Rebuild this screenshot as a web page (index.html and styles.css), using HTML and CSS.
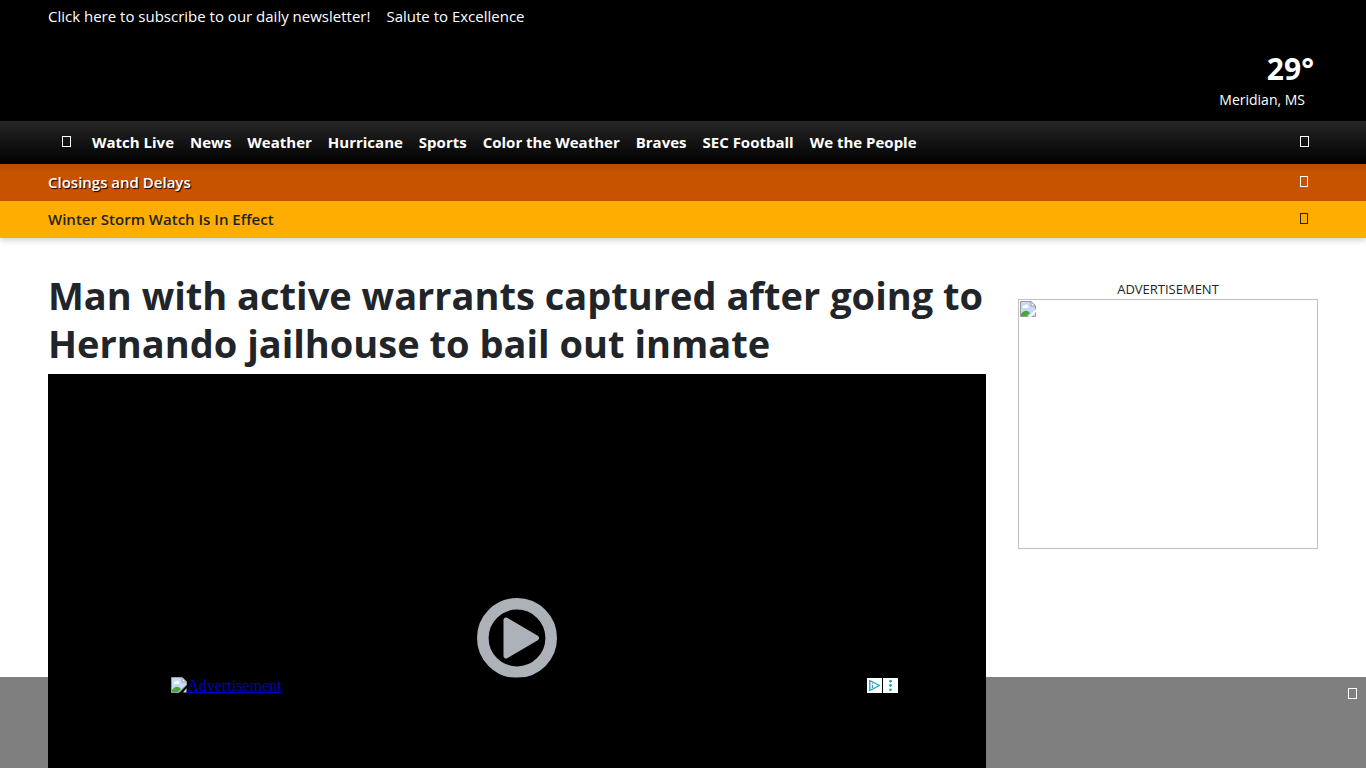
FILE: index.html
```html
<!DOCTYPE html>
<html lang="en">
<head>
<meta charset="utf-8">
<meta name="viewport" content="width=device-width, initial-scale=1">
<title>Man with active warrants captured after going to Hernando jailhouse to bail out inmate</title>
<link rel="stylesheet" href="styles.css">
</head>
<body>
<header class="site-header">
  <div class="masthead">
    <nav class="top-links" aria-label="Promotions">
      <a href="#">Click here to subscribe to our daily newsletter!</a>
      <a href="#">Salute to Excellence</a>
    </nav>
    <a class="weather" href="#">
      <span class="temp">29°</span>
      <span class="city">Meridian, MS</span>
    </a>
  </div>
  <nav class="main-nav" aria-label="Main">
    <button class="icon-button menu-button" type="button" aria-label="Menu"><span class="glyph"></span></button>
    <a href="#">Watch Live</a>
    <a href="#">News</a>
    <a href="#">Weather</a>
    <a href="#">Hurricane</a>
    <a href="#">Sports</a>
    <a href="#">Color the Weather</a>
    <a href="#">Braves</a>
    <a href="#">SEC Football</a>
    <a href="#">We the People</a>
    <button class="icon-button search-button" type="button" aria-label="Search"><span class="glyph"></span></button>
  </nav>
  <a class="alert closings" href="#">Closings and Delays <span class="glyph small"></span></a>
  <a class="alert storm" href="#">Winter Storm Watch Is In Effect <span class="glyph small"></span></a>
</header>
<main class="page">
  <article class="story">
    <h1>Man with active warrants captured after going to Hernando jailhouse to bail out inmate</h1>
    <div class="video">
      <button class="play" type="button" aria-label="Play video">
        <svg viewBox="0 0 80 80" width="80" height="80" aria-hidden="true">
          <circle cx="40" cy="40" r="34.2" fill="none" stroke="#adb1b8" stroke-width="11.6"/>
          <path d="M29 22 59.500 40 29 58Z" fill="#adb1b8" stroke="#adb1b8" stroke-width="5" stroke-linejoin="round"/>
        </svg>
      </button>
    </div>
  </article>
  <aside class="sidebar">
    <p class="ad-label">ADVERTISEMENT</p>
    <a class="ad-box" href="#" aria-label="Advertisement">
      <svg class="broken" viewBox="0 0 16 16" width="16" height="16" aria-hidden="true">
        <path d="M.5.5H11L15.500 5V15.500H.5Z" fill="#c5d9f8" stroke="#9a9a9a"/>
        <path d="M11 .5V5h4.500Z" fill="#fff" stroke="#9a9a9a"/>
        <path d="M3 7C2 5 4 4 5 5c1-3 4-1 3 1 1 1 0 1-1 1Z" fill="#fff"/>
        <path d="M1 15v-2c2-3 6-5 9-1l-3 3Z" fill="#4da43a"/>
        <path d="M8 16 16 8v3l-5 5Z" fill="#fff"/>
      </svg>
    </a>
  </aside>
</main>
<div class="bottom-ad">
  <div class="banner">
    <a class="banner-link" href="#">
      <svg class="broken" viewBox="0 0 16 16" width="16" height="16" aria-hidden="true">
        <path d="M.5.5H11L15.500 5V8L8 15.500H.5Z" fill="#c5d9f8" stroke="#9a9a9a"/>
        <path d="M11 .5V5h4.500Z" fill="#fff" stroke="#9a9a9a"/>
        <path d="M3 7C2 5 4 4 5 5c1-3 4-1 3 1 1 1 0 1-1 1Z" fill="#fff"/>
        <path d="M1 15v-2c2-3 6-5 9-1l-3 3Z" fill="#4da43a"/>
        <path d="M12 15.500H15.500V11Z" fill="#c5d9f8"/>
      </svg><span>Advertisement</span>
    </a>
    <div class="choices">
      <button type="button" aria-label="AdChoices">
        <svg viewBox="0 0 15 15" width="15" height="15" aria-hidden="true"><path d="M2.800 2.500 12.500 7.500 2.800 12.500Z" fill="none" stroke="#22a7bd" stroke-width="1.400" stroke-linejoin="round"/><path d="M5.500 7v3M5.500 4.800v1" stroke="#22a7bd" stroke-width="1.300"/></svg>
      </button>
      <button type="button" aria-label="Ad options">
        <svg viewBox="0 0 15 15" width="15" height="15" aria-hidden="true"><g fill="#22a7bd"><circle cx="7.500" cy="3.200" r="1.400"/><circle cx="7.500" cy="7.500" r="1.400"/><circle cx="7.500" cy="11.800" r="1.400"/></g></svg>
      </button>
    </div>
  </div>
  <button class="icon-button close-button" type="button" aria-label="Close advertisement"><span class="glyph"></span></button>
</div>
</body>
</html>
```

FILE: styles.css
```css
* {
  box-sizing: border-box;
}

body {
  margin: 0;
  background: #fff;
  color: #212529;
  font-family: "Segoe UI", "Open Sans", "Noto Sans", sans-serif;
  font-size: 15px;
  line-height: 24px;
}

a {
  color: inherit;
  text-decoration: none;
}

button {
  padding: 0;
  border: 0;
  background: none;
  color: inherit;
  font: inherit;
  cursor: pointer;
}

.site-header {
  position: relative;
  box-shadow: 0 2px 6px rgba(0, 0, 0, .2);
}

.masthead {
  display: flex;
  justify-content: space-between;
  min-height: 121px;
  padding: 4px 48px 0;
  background: #000;
  color: #fff;
}

.top-links {
  display: flex;
  gap: 16px;
}

.weather {
  display: flex;
  flex-direction: column;
  align-items: flex-end;
  padding: 46px 4px 0 0;
}

.temp {
  font-size: 30px;
  font-weight: 700;
  line-height: 38px;
}

.city {
  padding-right: 9px;
  font-size: 14px;
}

.main-nav {
  display: flex;
  align-items: center;
  gap: 16px;
  min-height: 43px;
  padding: 0 48px 2px;
  background: linear-gradient(#262626, #000);
  color: #fff;
  font-weight: 700;
}

.icon-button {
  display: flex;
  align-items: center;
  justify-content: center;
}

.menu-button {
  width: 28px;
  padding-left: 8px;
}

.search-button {
  width: 28px;
  margin-left: auto;
}

.glyph {
  width: 9px;
  height: 11px;
  border: 1px solid currentColor;
}

.glyph.small {
  width: 8px;
}

.alert {
  display: flex;
  align-items: center;
  justify-content: space-between;
  min-height: 37px;
  padding: 0 58px 2px 48px;
  font-weight: 600;
}

.closings {
  background: linear-gradient(#b94a02, #c75300 8px);
  color: #fff;
  text-shadow: 1px 1px 1px #000;
}

.storm {
  background: #ffae00;
  color: #212529;
}

.page {
  display: grid;
  grid-template-columns: minmax(0, 1fr) 300px;
  gap: 32px;
  padding: 33px 48px 0;
}

h1 {
  margin: 0 0 7px;
  font-size: 38px;
  font-weight: 700;
  line-height: 48px;
}

.video {
  display: grid;
  place-items: center;
  aspect-ratio: 16 / 9;
  background: #000;
}

.play,
.play svg {
  display: block;
}

.sidebar {
  padding-top: 8px;
}

.ad-label {
  margin: 0;
  font-size: 13px;
  line-height: 20px;
  text-align: center;
}

.ad-box {
  display: block;
  height: 250px;
  padding: 1px;
  border: 1px solid #c0c0c0;
}

.broken {
  display: block;
  flex: none;
}

.bottom-ad {
  position: fixed;
  right: 0;
  bottom: 0;
  left: 0;
  display: flex;
  align-items: flex-start;
  justify-content: space-between;
  min-height: 91px;
  padding-left: 171px;
  background: rgba(0, 0, 0, .5);
}

.banner {
  display: flex;
  align-items: flex-start;
  justify-content: space-between;
  width: 728px;
}

.banner-link {
  display: flex;
  color: #0000c8;
  font-family: "Liberation Serif", serif;
  font-size: 16px;
  line-height: 18px;
  text-decoration: underline;
}

.choices {
  display: flex;
  gap: 1px;
  padding: 1px 1px 0 0;
}

.choices button {
  background: #fff;
}

.choices svg {
  display: block;
}

.close-button {
  width: 28px;
  height: 32px;
  color: #fff;
}
```
